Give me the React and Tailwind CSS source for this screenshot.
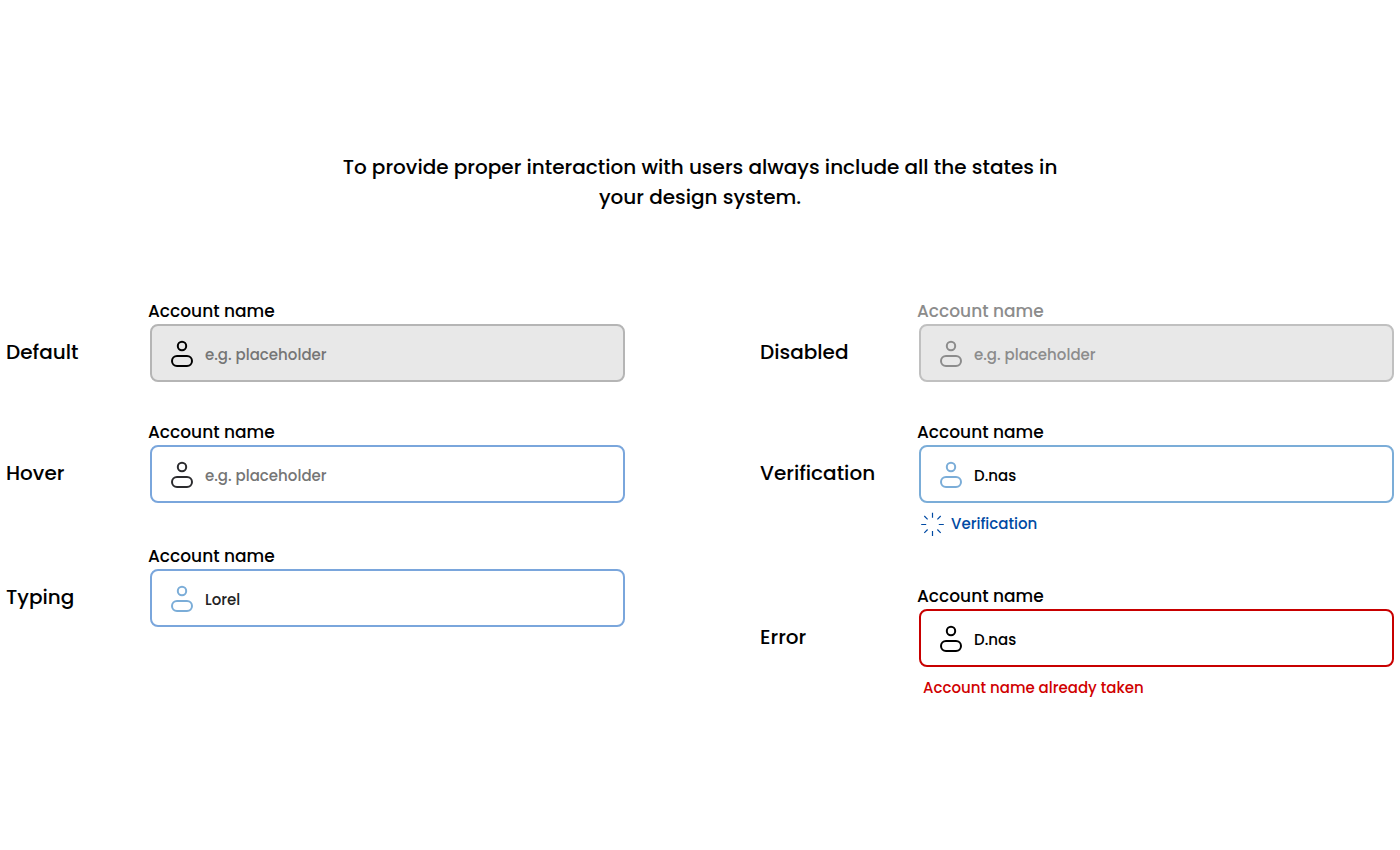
const UserIcon = ({ className }) => (
  <svg viewBox="0 0 24 28" fill="none" stroke="currentColor" strokeWidth="2" className={`w-6 h-7 shrink-0 ${className}`} aria-hidden="true">
    <circle cx="12" cy="6" r="4.2" />
    <rect x="2" y="16" width="20" height="10" rx="5" />
  </svg>
);

const LoaderIcon = () => (
  <svg viewBox="0 0 24 26" fill="none" stroke="currentColor" strokeWidth="1.2" className="w-6 h-[26px] shrink-0" aria-hidden="true">
    <path d="M12.5 1.8v5M12.5 20v5M1.2 13.5h5M18.8 13.5h5M4.3 5l3.3 3.3M20.7 5l-3.3 3.3M4.3 21.8l3.3-3.3M20.7 21.8l-3.3-3.3" />
  </svg>
);

const inputStates = [
  {
    id: "default", title: "Default", placeholder: "e.g. placeholder",
    box: "border-[#b5b5b5] bg-[#e8e8e8]", icon: "text-black", text: "placeholder:text-[#757575]",
  },
  {
    id: "hover", title: "Hover", placeholder: "e.g. placeholder", row: "mt-[37px]",
    box: "border-[#7aa6dc]", icon: "text-[#2b2b2e]", text: "placeholder:text-[#757575]",
  },
  {
    id: "typing", title: "Typing", value: "Lorel", row: "mt-10",
    box: "border-[#7aa6dc]", icon: "text-[#7badd8]", text: "text-[#222222]",
  },
];

const feedbackStates = [
  {
    id: "disabled", title: "Disabled", placeholder: "e.g. placeholder", disabled: true,
    label: "text-[#8c8c8c]", box: "border-[#c0c0c0] bg-[#e8e8e8]", icon: "text-[#8c8c8c]", text: "placeholder:text-[#8c8c8c]",
  },
  {
    id: "verification", title: "Verification", value: "D.nas", row: "mt-[37px]",
    box: "border-[#7badd8]", icon: "text-[#7badd8]", text: "text-black",
    helper: (
      <p className="mt-[9px] ml-[3px] h-6 flex items-center gap-[7px] text-[15px] text-[#004aa3]">
        <LoaderIcon />
        Verification
      </p>
    ),
  },
  {
    id: "error", title: "Error", value: "D.nas", row: "mt-[47px]", invalid: true,
    box: "border-[#c80000]", icon: "text-black", text: "text-black",
    helper: <p className="mt-[9px] ml-1.5 h-6 text-[15px] leading-6 text-[#d00000]">Account name already taken</p>,
  },
];

function StateRow({ state, titleWidth }) {
  return (
    <div className={`flex ${state.row || ""}`}>
      <h2 className={`${titleWidth} shrink-0 mt-[25px] h-[58px] flex items-center text-xl`}>{state.title}</h2>
      <div className="flex-1 min-w-0">
        <label htmlFor={state.id} className={`block h-[26px] text-[17px] leading-[26px] ${state.label || ""}`}>
          Account name
        </label>
        <div className={`ml-0.5 h-[58px] flex items-center gap-[11px] pt-0.5 pl-[18px] pr-4 border-2 rounded-lg ${state.box}`}>
          <UserIcon className={state.icon} />
          <input
            id={state.id}
            type="text"
            placeholder={state.placeholder}
            defaultValue={state.value}
            disabled={state.disabled}
            aria-invalid={state.invalid}
            className={`flex-1 min-w-0 h-full bg-transparent outline-none text-[15px] ${state.text}`}
          />
        </div>
        {state.helper}
      </div>
    </div>
  );
}

export default function App() {
  return (
    <main className="min-h-screen bg-white px-1.5 pt-[152px] pb-36 text-black font-medium font-[Poppins,Inter,sans-serif]">
      <h1 className="max-w-[740px] mx-auto text-center text-xl leading-[30px]">
        To provide proper interaction with users always include all the states in your design system.
      </h1>

      <div className="mt-[86px] grid grid-cols-[619fr_634fr] gap-x-[135px]">
        {/* Base states */}
        <section>
          {inputStates.map((s) => (
            <StateRow key={s.id} state={s} titleWidth="w-[142px]" />
          ))}
        </section>

        {/* Feedback states */}
        <section>
          {feedbackStates.map((s) => (
            <StateRow key={s.id} state={s} titleWidth="w-[157px]" />
          ))}
        </section>
      </div>
    </main>
  );
}
